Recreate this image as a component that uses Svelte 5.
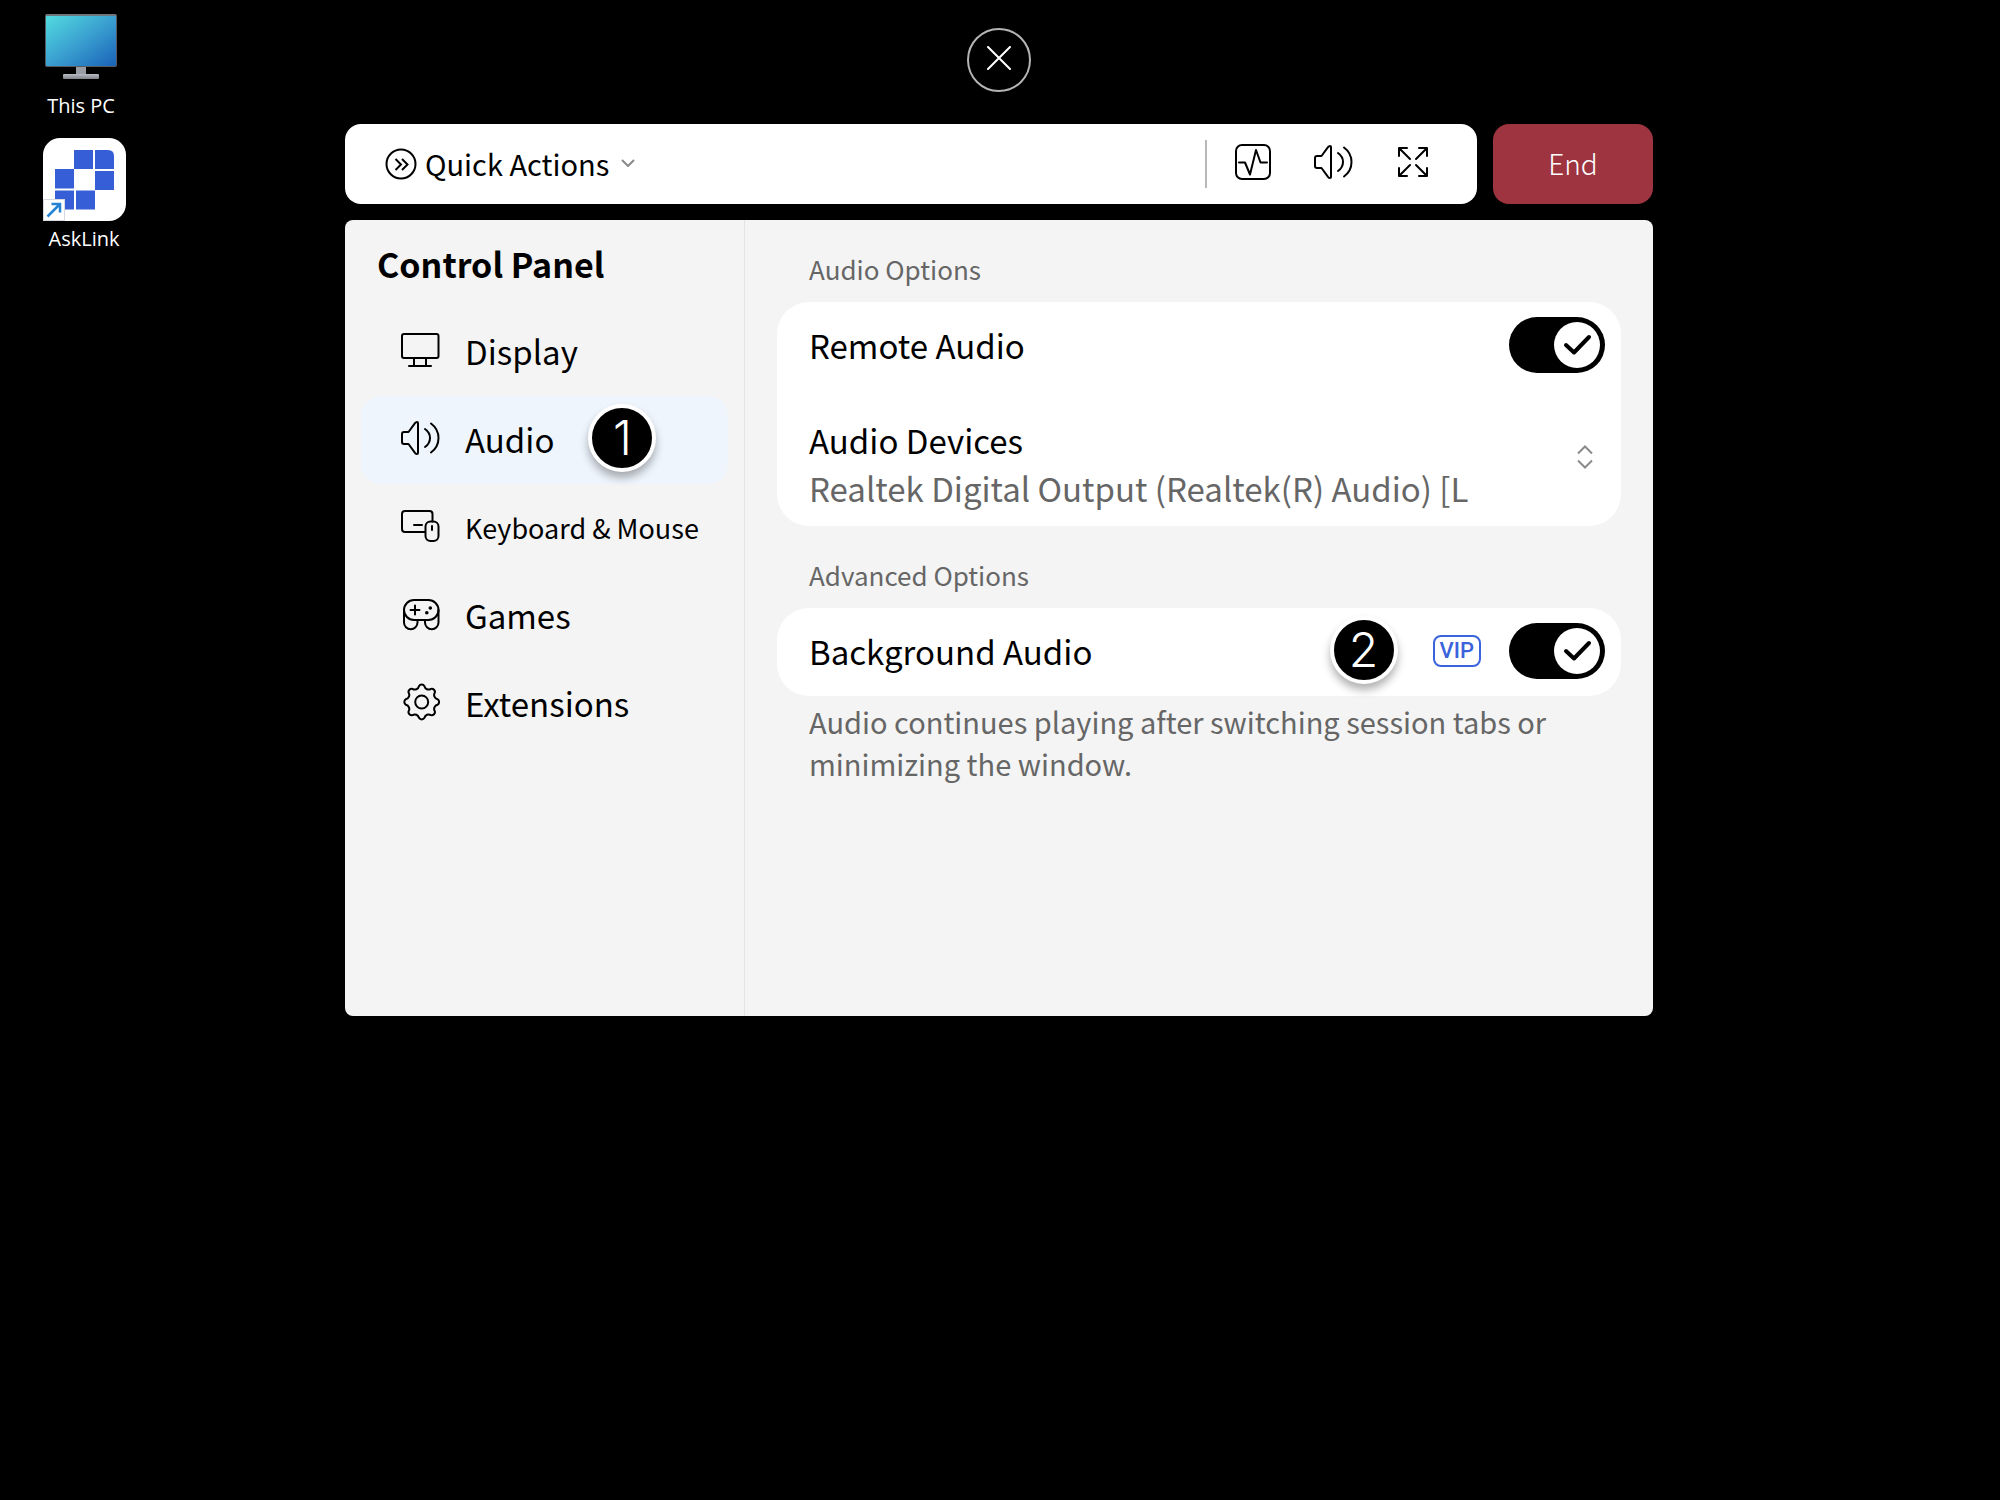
<script lang="ts">
  type IconName = 'display' | 'audio' | 'keyboard' | 'games' | 'extensions';

  const navItems: { id: IconName; label: string; compact?: boolean; step?: number }[] = [
    { id: 'display', label: 'Display' },
    { id: 'audio', label: 'Audio', step: 1 },
    { id: 'keyboard', label: 'Keyboard & Mouse', compact: true },
    { id: 'games', label: 'Games' },
    { id: 'extensions', label: 'Extensions' },
  ];

  const devices = ['Realtek Digital Output (Realtek(R) Audio) [L'];

  let active = $state<IconName>('audio');
  let remoteAudio = $state(true);
  let backgroundAudio = $state(true);
  let device = $state(devices[0]);

  // eight rounded teeth around (cx, cy)
  function gearPath(cx: number, cy: number) {
    const at = (deg: number) => {
      const a = (deg * Math.PI) / 180;
      return `${(cx + 16 * Math.cos(a)).toFixed(2)} ${(cy + 16 * Math.sin(a)).toFixed(2)}`;
    };
    let d = `M${at(-10)}`;
    for (let i = 0; i < 8; i++) {
      d += `A3.2 3.2 0 0 1 ${at(i * 45 + 10)}A4.2 4.2 0 0 0 ${at(i * 45 + 35)}`;
    }
    return d + 'Z';
  }
</script>

{#snippet speaker()}
  <path d="M4 14h4.5L15 5.2Q16 4 17 4T18 5V35Q18 36 17 36T15 34.8L8.500 26H4a2 2 0 0 1-2-2v-8a2 2 0 0 1 2-2z" />
  <path d="M25 11q5 3.500 5 9t-5 9M31 5.500q7.500 5.500 7.500 14.500T31 34.500" />
{/snippet}

{#snippet navIcon(id: IconName)}
  <svg class="icon" viewBox="0 0 40 40" aria-hidden="true">
    {#if id === 'display'}
      <rect x="2" y="4" width="36.500" height="24" rx="2" />
      <path d="M14 28v8M26 28v8M9 36h22" />
    {:else if id === 'audio'}
      {@render speaker()}
    {:else if id === 'keyboard'}
      <path d="M25 26H5a3 3 0 0 1-3-3V8a3 3 0 0 1 3-3h24.500a3 3 0 0 1 3 3v7.500" />
      <rect x="25.500" y="15.500" width="13" height="19.500" rx="5" />
      <path d="M14 19h8M32 20v4" />
    {:else if id === 'games'}
      <rect x="4" y="6" width="34.500" height="20" rx="10" />
      <path d="M4 16v12.500a6.500 6.500 0 0 0 13.500 0V26M38.500 16v12.500a6.500 6.500 0 0 1-13.500 0V26" />
      <path d="M10.500 16h9M15 11.500v9" />
      <circle class="dot" cx="30.300" cy="14" r="1.800" />
      <circle class="dot" cx="26.800" cy="18.700" r="1.800" />
    {:else}
      <path d={gearPath(21.7, 20)} />
      <circle cx="21.700" cy="20" r="6.500" />
    {/if}
  </svg>
{/snippet}

{#snippet toggleTick()}
  <span class="knob">
    <svg viewBox="0 0 46 46" aria-hidden="true"><path d="M12 23l8 7.500L35 15" /></svg>
  </span>
{/snippet}

<div class="desktop">
  <div class="shortcuts">
    <a class="shortcut" href="#this-pc">
      <svg width="72" height="66" viewBox="0 0 72 66" aria-hidden="true">
        <defs>
          <linearGradient id="screen" x1="0" y1="0" x2="1" y2="1">
            <stop offset="0" stop-color="#52dbe0" />
            <stop offset="0.5" stop-color="#3aa0d0" />
            <stop offset="1" stop-color="#1a62b8" />
          </linearGradient>
          <linearGradient id="stand" x1="0" y1="0" x2="0" y2="1">
            <stop offset="0" stop-color="#b9bcc4" />
            <stop offset="1" stop-color="#80838a" />
          </linearGradient>
        </defs>
        <rect width="72" height="53" rx="2" fill="#565c64" />
        <path d="M1 1h70" stroke="#8b8f94" />
        <rect x="1" y="2" width="70" height="50" rx="1" fill="url(#screen)" />
        <rect x="31" y="53" width="10" height="8" fill="#999ca5" />
        <rect x="18" y="60" width="36" height="5" rx="1" fill="url(#stand)" />
      </svg>
      <span>This PC</span>
    </a>
    <a class="shortcut" href="#asklink">
      <svg width="83" height="83" viewBox="0 0 83 83" aria-hidden="true">
        <rect width="83" height="83" rx="17" fill="#fff" />
        <g fill="#365ed6">
          <rect x="31" y="12" width="19" height="19" />
          <path d="M52 12h13q6 0 6 6v13H52z" />
          <rect x="12" y="31" width="19" height="19.500" />
          <rect x="52" y="33" width="19" height="19" />
          <rect x="12" y="52.500" width="19" height="19" />
          <rect x="33" y="52.500" width="19" height="19" />
        </g>
        <rect x="0.500" y="61.500" width="21" height="21" fill="#fff" stroke="#d5d9e2" />
        <path d="M4.500 78.500L17 66M8.500 66H17v8.500" fill="none" stroke="#2583d6" stroke-width="2.500" />
      </svg>
      <span>AskLink</span>
    </a>
  </div>

  <main class="session">
    <button class="close" aria-label="Close">
      <svg width="24" height="24" viewBox="0 0 24 24" aria-hidden="true">
        <path d="M1 1l22 22M23 1L1 23" />
      </svg>
    </button>

    <header class="top">
      <div class="toolbar">
        <button class="quick">
          <svg class="quick-icon" viewBox="0 0 32 32" aria-hidden="true">
            <circle cx="16" cy="16" r="14.500" />
            <path d="M10.500 11l5.500 5.500-5.500 5.500M17 11l5.500 5.500L17 22" />
          </svg>
          <span>Quick Actions</span>
          <svg class="chevron" width="14" height="8" viewBox="0 0 14 8" aria-hidden="true">
            <path d="M1 1l6 6 6-6" />
          </svg>
        </button>
        <div class="tools">
          <button aria-label="Performance">
            <svg class="icon" viewBox="0 0 40 40" aria-hidden="true">
              <rect x="3" y="3" width="34" height="34" rx="6" />
              <path d="M6 20.500H12l5 12 6-24.500L27.500 20.500H34" />
            </svg>
          </button>
          <button aria-label="Volume">
            <svg class="icon" viewBox="0 0 40 40" aria-hidden="true">{@render speaker()}</svg>
          </button>
          <button aria-label="Full screen">
            <svg class="icon" viewBox="0 0 40 40" aria-hidden="true">
              <path d="M14 6H6v8M6 6l11 11M26 6h8v8M34 6L23 17M14 34H6v-8M6 34l11-11M26 34h8v-8M34 34L23 23" />
            </svg>
          </button>
        </div>
      </div>
      <button class="end">End</button>
    </header>

    <section class="panel">
      <aside class="sidebar">
        <h1>Control Panel</h1>
        <nav>
          {#each navItems as item (item.id)}
            <button
              class="nav-item"
              class:active={active === item.id}
              class:compact={item.compact}
              onclick={() => (active = item.id)}
            >
              {@render navIcon(item.id)}
              {item.label}
              {#if item.step}<span class="step">{item.step}</span>{/if}
            </button>
          {/each}
        </nav>
      </aside>

      <div class="content">
        <h2>Audio Options</h2>
        <div class="card">
          <div class="row">
            <label class="name" for="remote-audio">Remote Audio</label>
            <span class="toggle">
              <input id="remote-audio" type="checkbox" role="switch" bind:checked={remoteAudio} />
              {@render toggleTick()}
            </span>
          </div>
          <div class="device">
            <label for="device">Audio Devices</label>
            <select id="device" bind:value={device}>
              {#each devices as d (d)}
                <option value={d}>{d}</option>
              {/each}
            </select>
            <svg class="updown" width="16" height="24" viewBox="0 0 16 24" aria-hidden="true">
              <path d="M1 8.500l7-7 7 7M1 15.500l7 7 7-7" />
            </svg>
          </div>
        </div>

        <h2>Advanced Options</h2>
        <div class="card">
          <div class="row">
            <label class="name" for="background-audio">Background Audio</label>
            <span class="step">2</span>
            <span class="vip">VIP</span>
            <span class="toggle">
              <input
                id="background-audio"
                type="checkbox"
                role="switch"
                aria-describedby="background-hint"
                bind:checked={backgroundAudio}
              />
              {@render toggleTick()}
            </span>
          </div>
        </div>
        <p id="background-hint">Audio continues playing after switching session tabs or minimizing the window.</p>
      </div>
    </section>
  </main>
</div>

<style>
  :global(body) {
    background: #000;
  }
  .desktop {
    position: relative;
    min-height: 100vh;
    box-sizing: border-box;
    padding: 28px 18px 28px 16px;
    font-family: 'Noto Sans CJK SC', 'Noto Sans', sans-serif;
    font-size: 33px;
    color: #000;
  }
  button,
  select {
    margin: 0;
    padding: 0;
    border: 0;
    background: none;
    font: inherit;
    color: inherit;
    cursor: pointer;
  }
  svg {
    display: block;
    flex: none;
  }

  .shortcuts {
    position: absolute;
    top: 14px;
    left: 32px;
    width: 104px;
    display: flex;
    flex-direction: column;
    gap: 18px;
  }
  .shortcut {
    display: flex;
    flex-direction: column;
    align-items: center;
    gap: 12px;
    padding-right: 6px;
    color: #fff;
    font-family: 'Open Sans', 'Noto Sans', sans-serif;
    font-size: 20px;
    line-height: 28px;
    text-decoration: none;
  }
  .shortcut + .shortcut {
    gap: 4px;
    padding-right: 0;
  }

  .session {
    max-width: 1308px;
    margin: 0 auto;
    display: flex;
    flex-direction: column;
  }
  .close {
    align-self: center;
    display: grid;
    place-items: center;
    width: 64px;
    height: 64px;
    box-sizing: border-box;
    margin-bottom: 32px;
    border: 2px solid #b4b4b4;
    border-radius: 50%;
  }
  .close svg {
    margin-bottom: 4px;
    fill: none;
    stroke: #fff;
    stroke-width: 2;
    stroke-linecap: round;
  }

  .top {
    display: flex;
    gap: 16px;
    margin-bottom: 16px;
  }
  .toolbar {
    flex: 1;
    display: flex;
    align-items: center;
    justify-content: space-between;
    height: 80px;
    box-sizing: border-box;
    padding: 0 44px 0 40px;
    background: #fff;
    border-radius: 16px;
  }
  .quick {
    display: flex;
    align-items: center;
    gap: 8px;
    font-size: 29px;
    line-height: 48px;
  }
  .quick span {
    padding-bottom: 2px;
  }
  .quick-icon {
    width: 32px;
    height: 32px;
    fill: none;
    stroke: #000;
    stroke-width: 2;
  }
  .chevron {
    margin: 0 0 2px 4px;
    fill: none;
    stroke: #8a8a8a;
    stroke-width: 2;
  }
  .tools {
    display: flex;
    align-items: center;
    gap: 40px;
    height: 48px;
    padding-left: 26px;
    border-left: 2px solid #b8b8b8;
  }
  .end {
    width: 160px;
    padding-bottom: 2px;
    background: #9d3440;
    border-radius: 16px;
    color: #fff;
    font-size: 28px;
    font-weight: 300;
  }
  .icon {
    width: 40px;
    height: 40px;
    margin-bottom: 2px;
    fill: none;
    stroke: #000;
    stroke-width: 2;
    stroke-linecap: round;
    stroke-linejoin: round;
  }
  .tools .icon {
    margin-bottom: 4px;
  }
  .dot {
    fill: #000;
    stroke: none;
  }

  .panel {
    display: flex;
    min-height: 796px;
    background: #f4f4f4;
    border-radius: 8px;
  }
  .sidebar {
    width: 400px;
    flex: none;
    box-sizing: border-box;
    padding: 16px 16px 0;
    border-right: 1px solid #e4e4e4;
  }
  h1 {
    margin: 0 16px 16px;
    font-size: 34px;
    font-weight: 700;
    line-height: 56px;
  }
  .nav-item {
    display: flex;
    align-items: center;
    width: 100%;
    height: 88px;
    padding: 0 0 2px 39px;
    border-radius: 20px;
    white-space: nowrap;
  }
  .nav-item .icon {
    margin-right: 25px;
  }
  .nav-item .step {
    margin-left: 34px;
  }
  .active {
    background: #eef5fd;
  }
  .compact {
    font-size: 27px;
  }
  .step {
    display: grid;
    place-items: center;
    flex: none;
    width: 68px;
    height: 68px;
    box-sizing: border-box;
    margin-bottom: 2px;
    border: 4px solid #fff;
    border-radius: 50%;
    background: #000;
    box-shadow: 0 6px 8px rgb(0 0 0 / 30%);
    color: #fff;
    font-family: Inter, Roboto, sans-serif;
    font-size: 48px;
    font-weight: 300;
    line-height: 60px;
  }

  .content {
    flex: 1;
    min-width: 0;
    padding: 18px 32px 32px;
  }
  h2 {
    margin: 0 32px;
    padding-bottom: 2px;
    font-size: 26px;
    font-weight: 400;
    line-height: 62px;
    color: #666;
  }
  .card {
    background: #fff;
    border-radius: 32px;
  }
  .card + h2 {
    margin-top: 18px;
  }
  .row {
    display: flex;
    align-items: center;
    height: 88px;
    box-sizing: border-box;
    padding: 0 16px 2px 32px;
  }
  .name {
    margin-right: auto;
  }
  .toggle {
    position: relative;
    width: 96px;
    height: 56px;
  }
  .toggle input {
    appearance: none;
    display: block;
    width: 96px;
    height: 56px;
    margin: 0;
    border-radius: 28px;
    background: #000;
    cursor: pointer;
  }
  .toggle input:not(:checked) {
    background: #b8b8b8;
  }
  .knob {
    position: absolute;
    top: 5px;
    right: 5px;
    width: 46px;
    height: 46px;
    border-radius: 50%;
    background: #fff;
    pointer-events: none;
  }
  .toggle input:not(:checked) + .knob {
    right: 45px;
  }
  .knob path {
    fill: none;
    stroke: #000;
    stroke-width: 4;
    stroke-linecap: round;
    stroke-linejoin: round;
  }
  .device {
    display: grid;
    grid-template-columns: 1fr auto;
    align-items: center;
    padding: 26px 28px 14px 32px;
    line-height: 48px;
  }
  .device select {
    grid-column: 1;
    appearance: none;
    height: 48px;
    line-height: 48px;
    color: #666;
  }
  .updown {
    grid-column: 2;
    grid-row: 1 / 3;
    margin-bottom: 14px;
    fill: none;
    stroke: #8a8a8a;
    stroke-width: 2;
  }
  .vip {
    margin: 0 28px 0 35px;
    padding: 0 5px;
    border: 2px solid #3a63dc;
    border-radius: 8px;
    color: #3a63dc;
    font-family: Roboto, sans-serif;
    font-size: 22px;
    font-weight: 500;
    line-height: 28px;
  }
  p {
    margin: 4px 32px 0;
    font-size: 29px;
    line-height: 42px;
    color: #666;
  }
</style>
